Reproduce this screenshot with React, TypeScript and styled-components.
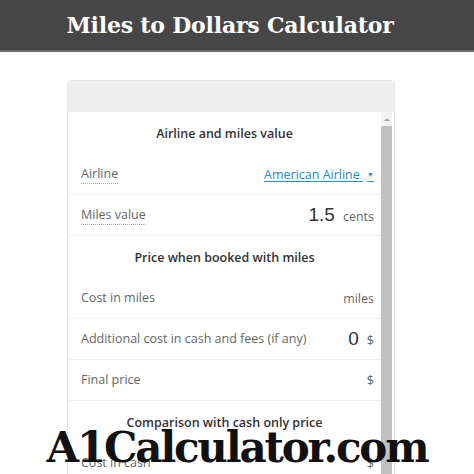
import React from 'react'
import styled, { createGlobalStyle } from 'styled-components'

const GlobalStyle = createGlobalStyle`
  html, body {
    margin: 0;
    padding: 0;
    background: #fff;
    overflow: hidden;
  }
  body {
    font-family: 'Open Sans', 'Noto Sans', sans-serif;
  }
`

const Page = styled.div`
  position: relative;
  width: 474px;
  height: 474px;
  overflow: hidden;
`

const TitleBar = styled.header`
  height: 50px;
  background: #464646;
  border-bottom: 2px solid #6e6e6e;
  display: flex;
  align-items: center;
  justify-content: center;
  padding-right: 14px;
  & > h1 {
    margin: 0;
    color: #fff;
    font-family: 'DejaVu Serif', serif;
    font-weight: 700;
    font-size: 22px;
    letter-spacing: -0.2px;
  }
`

const Card = styled.section`
  margin: 28px 0 0 67px;
  width: 326px;
  border: 1px solid #e6e6e6;
  border-radius: 4px;
  overflow: hidden;
`

const CardHead = styled.div`
  height: 31px;
  background: #efefef;
`

const CardBody = styled.div`
  height: 400px;
  display: flex;
  background: #fff;
`

const Fields = styled.div`
  flex: 1;
  min-width: 0;
`

const ScrollTrack = styled.div`
  width: 11px;
  margin-right: 2px;
  display: flex;
  flex-direction: column;
  background: #f3f3f3;
`

const ScrollArrow = styled.div`
  height: 14px;
  display: flex;
  align-items: center;
  justify-content: center;
  &::before {
    content: '';
    border-left: 3px solid transparent;
    border-right: 3px solid transparent;
    border-bottom: 3px solid #a3a3a3;
  }
`

const ScrollThumb = styled.div`
  flex: 1;
  background: #c1c1c1;
`

const Heading = styled.div`
  height: 42px;
  display: flex;
  align-items: center;
  justify-content: center;
  font-size: 12.5px;
  font-weight: 600;
  color: #333;
`

const Row = styled.div`
  height: 41px;
  box-sizing: border-box;
  display: flex;
  align-items: center;
  justify-content: space-between;
  padding: 0 7px 0 13px;
  border-bottom: 1px solid #f0f0f0;
`

const Label = styled.span<{ $hint?: boolean }>`
  font-size: 12.5px;
  color: #666;
  padding-bottom: 1px;
  border-bottom: ${({ $hint }) => ($hint ? '1px dotted #aaa' : 'none')};
`

const Value = styled.div`
  display: flex;
  align-items: baseline;
  gap: 8px;
`

const NumberText = styled.span`
  font-family: 'Liberation Sans', Arial, sans-serif;
  font-size: 19px;
  color: #333;
`

const Unit = styled.span`
  font-size: 12.5px;
  color: #666;
`

const Select = styled.span`
  font-size: 12.5px;
  color: #2b8bc2;
  text-decoration: underline;
  text-underline-offset: 2px;
  & > small {
    font-size: 7px;
    padding-left: 4px;
    position: relative;
    top: -2px;
  }
`

const Watermark = styled.div`
  position: absolute;
  left: 0;
  right: 0;
  bottom: 5px;
  text-align: center;
  font-family: 'DejaVu Serif', serif;
  font-weight: 700;
  font-size: 42px;
  letter-spacing: -2.2px;
  color: #111;
  line-height: 1;
`

export default function App() {
  return (
    <Page>
      <GlobalStyle />
      <TitleBar>
        <h1>Miles to Dollars Calculator</h1>
      </TitleBar>
      <Card>
        <CardHead />
        <CardBody>
          <Fields>
            <Heading>Airline and miles value</Heading>
            <Row>
              <Label $hint>Airline</Label>
              <Select>
                American Airline <small>▼</small>
              </Select>
            </Row>
            <Row>
              <Label $hint>Miles value</Label>
              <Value>
                <NumberText>1.5</NumberText>
                <Unit>cents</Unit>
              </Value>
            </Row>
            <Heading>Price when booked with miles</Heading>
            <Row>
              <Label>Cost in miles</Label>
              <Unit>miles</Unit>
            </Row>
            <Row>
              <Label>Additional cost in cash and fees (if any)</Label>
              <Value>
                <NumberText>0</NumberText>
                <Unit>$</Unit>
              </Value>
            </Row>
            <Row>
              <Label>Final price</Label>
              <Unit>$</Unit>
            </Row>
            <Heading>Comparison with cash only price</Heading>
            <Row>
              <Label>Cost in cash</Label>
              <Unit>$</Unit>
            </Row>
          </Fields>
          <ScrollTrack>
            <ScrollArrow />
            <ScrollThumb />
          </ScrollTrack>
        </CardBody>
      </Card>
      <Watermark>A1Calculator.com</Watermark>
    </Page>
  )
}
